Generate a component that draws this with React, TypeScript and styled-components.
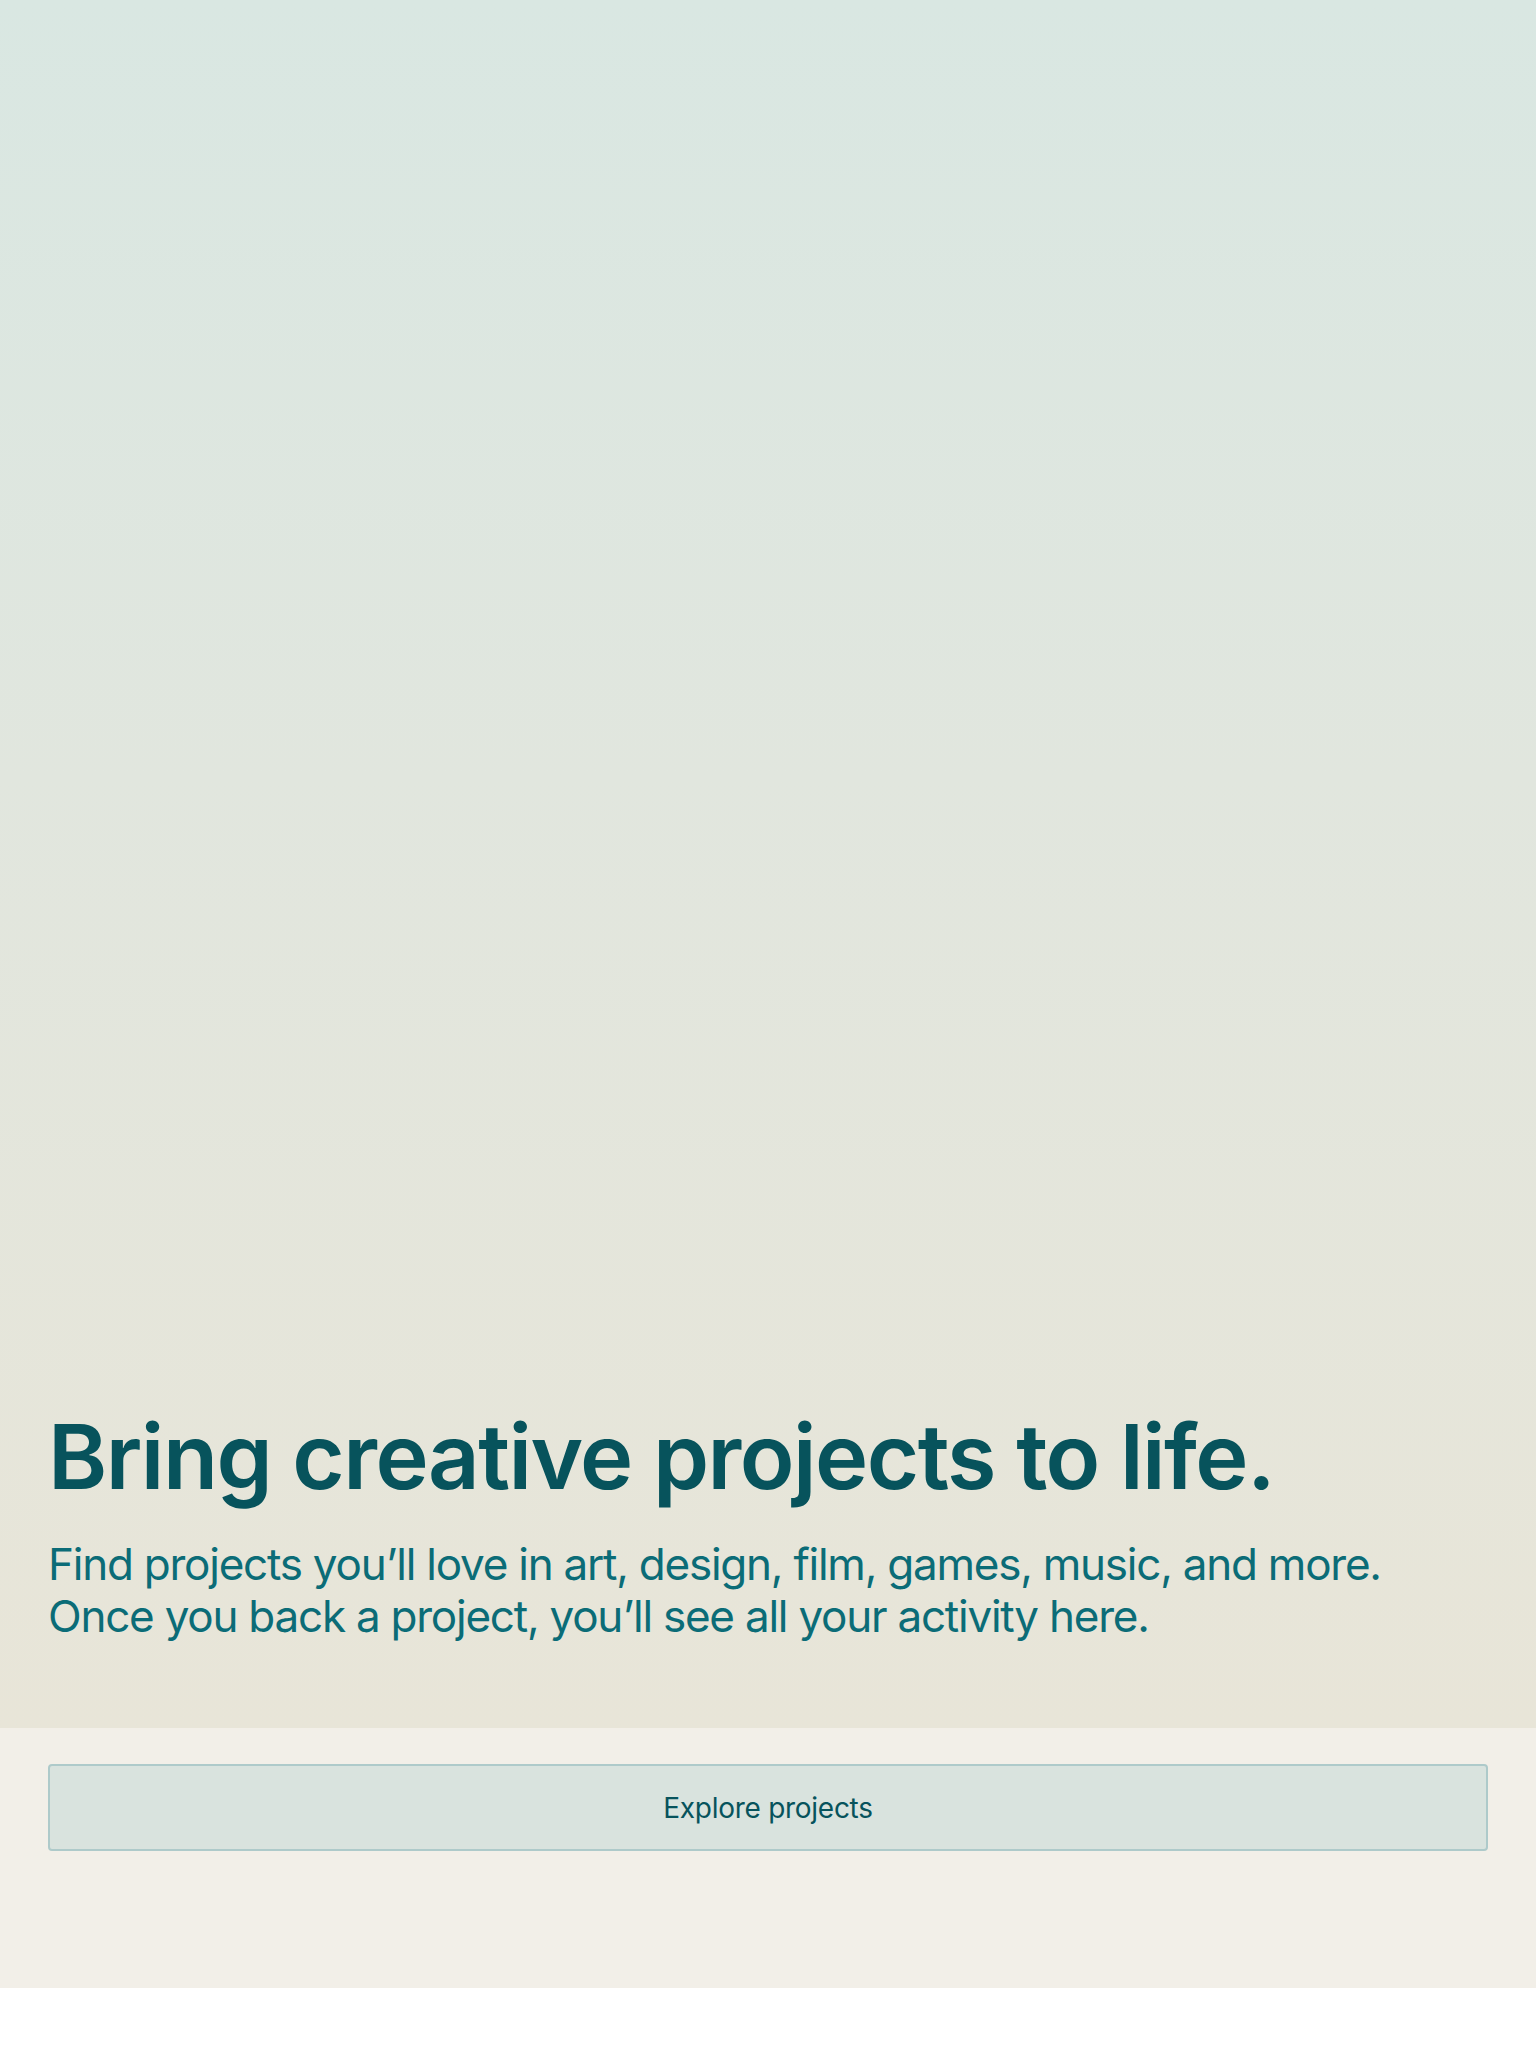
import React from "react";
import styled, { createGlobalStyle } from "styled-components";

const Global = createGlobalStyle`
  html, body { margin: 0; padding: 0; background: #ffffff; }
  body { font-family: Inter, "Noto Sans", "Liberation Sans", sans-serif; -webkit-font-smoothing: antialiased; }
  * { box-sizing: border-box; }
`;

const Page = styled.div`
  display: flex;
  flex-direction: column;
  width: 100%;
`;

const Hero = styled.section`
  height: 1728px;
  display: flex;
  flex-direction: column;
  justify-content: flex-end;
  padding: 0 48px 86px;
  background: linear-gradient(180deg, #d9e7e2 0%, #e1e6de 45%, #e8e5d8 100%);
`;

const Title = styled.h1`
  margin: 0 0 26px;
  font-family: Inter, "Noto Sans", sans-serif;
  font-weight: 600;
  font-size: 90px;
  line-height: 110px;
  letter-spacing: -0.017em;
  color: #07535c;
`;

const Lede = styled.p`
  margin: 0;
  font-family: Inter, "Noto Sans", sans-serif;
  font-weight: 400;
  font-size: 44px;
  line-height: 52px;
  letter-spacing: -0.028em;
  color: #0b6c77;
`;

const Footer = styled.section`
  height: 260px;
  padding: 36px 48px 0;
  background: #f2efe8;
`;

const ExploreButton = styled.button`
  display: flex;
  align-items: center;
  justify-content: center;
  width: 100%;
  height: 87px;
  border: 2px solid #aecaca;
  border-radius: 4px;
  background: #d9e3de;
  color: #07535c;
  font-family: Inter, "Noto Sans", sans-serif;
  font-size: 28px;
  font-weight: 400;
  letter-spacing: -0.01em;
  cursor: pointer;
`;

export default function App() {
  return (
    <Page>
      <Global />
      <Hero>
        <Title>Bring creative projects to life.</Title>
        <Lede>
          Find projects you’ll love in art, design, film, games, music, and more.
          <br />
          Once you back a project, you’ll see all your activity here.
        </Lede>
      </Hero>
      <Footer>
        <ExploreButton>Explore projects</ExploreButton>
      </Footer>
    </Page>
  );
}
